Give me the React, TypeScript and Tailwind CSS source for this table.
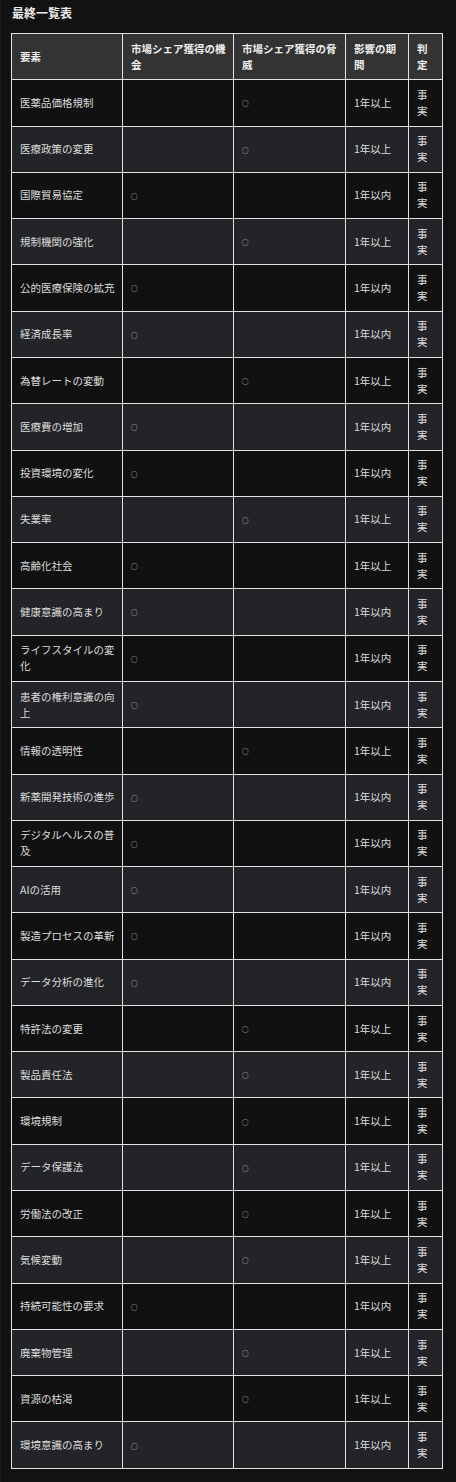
import React from 'react';

type Row = { name: string; opp: boolean; period: string };

// threat is simply the inverse of opp in this table
const rows: Row[] = [
  { name: '医薬品価格規制', opp: false, period: '1年以上' },
  { name: '医療政策の変更', opp: false, period: '1年以上' },
  { name: '国際貿易協定', opp: true, period: '1年以内' },
  { name: '規制機関の強化', opp: false, period: '1年以上' },
  { name: '公的医療保険の拡充', opp: true, period: '1年以内' },
  { name: '経済成長率', opp: true, period: '1年以内' },
  { name: '為替レートの変動', opp: false, period: '1年以上' },
  { name: '医療費の増加', opp: true, period: '1年以内' },
  { name: '投資環境の変化', opp: true, period: '1年以内' },
  { name: '失業率', opp: false, period: '1年以上' },
  { name: '高齢化社会', opp: true, period: '1年以上' },
  { name: '健康意識の高まり', opp: true, period: '1年以内' },
  { name: 'ライフスタイルの変化', opp: true, period: '1年以内' },
  { name: '患者の権利意識の向上', opp: true, period: '1年以内' },
  { name: '情報の透明性', opp: false, period: '1年以上' },
  { name: '新薬開発技術の進歩', opp: true, period: '1年以内' },
  { name: 'デジタルヘルスの普及', opp: true, period: '1年以内' },
  { name: 'AIの活用', opp: true, period: '1年以内' },
  { name: '製造プロセスの革新', opp: true, period: '1年以内' },
  { name: 'データ分析の進化', opp: true, period: '1年以内' },
  { name: '特許法の変更', opp: false, period: '1年以上' },
  { name: '製品責任法', opp: false, period: '1年以上' },
  { name: '環境規制', opp: false, period: '1年以上' },
  { name: 'データ保護法', opp: false, period: '1年以上' },
  { name: '労働法の改正', opp: false, period: '1年以上' },
  { name: '気候変動', opp: false, period: '1年以上' },
  { name: '持続可能性の要求', opp: true, period: '1年以内' },
  { name: '廃棄物管理', opp: false, period: '1年以上' },
  { name: '資源の枯渇', opp: false, period: '1年以上' },
  { name: '環境意識の高まり', opp: true, period: '1年以内' },
];

const cell = 'border border-[#e2e2e2] pl-2 pr-[5px] py-[6.65px] align-middle';

const Mark = () => <span className="text-[6.5px] align-middle">○</span>;

export default function App() {
  return (
    <div
      className="min-h-[1482px] bg-[#121212] border-l border-[#1f1f1f] pl-[10px] pt-[3px] pb-[14px] text-[#dcdcdc]"
      style={{ fontFamily: '"Noto Sans CJK JP", "Noto Sans", sans-serif' }}
    >
      <h2 className="text-[12px] font-bold leading-[20px] text-[#ececec] pl-[1px] mb-[10px]">最終一覧表</h2>
      <table className="w-[431px] table-fixed border-collapse text-[10.5px] leading-[16px]">
        <colgroup>
          <col className="w-[111px]" />
          <col className="w-[111px]" />
          <col className="w-[112px]" />
          <col className="w-[63px]" />
          <col className="w-[34px]" />
        </colgroup>
        <thead>
          <tr className="bg-[#333333] text-left font-bold text-[#eeeeee]">
            <th className={cell}>要素</th>
            <th className={cell}>市場シェア獲得の機会</th>
            <th className={cell}>市場シェア獲得の脅威</th>
            <th className={cell}>影響の期間</th>
            <th className={cell}>判定</th>
          </tr>
        </thead>
        <tbody>
          {rows.map((r, i) => (
            <tr key={r.name} className={i % 2 === 0 ? 'bg-[#111111]' : 'bg-[#232427]'}>
              <td className={cell}>{r.name}</td>
              <td className={cell}>{r.opp ? <Mark /> : null}</td>
              <td className={cell}>{r.opp ? null : <Mark />}</td>
              <td className={cell}>{r.period}</td>
              <td className={cell}>事実</td>
            </tr>
          ))}
        </tbody>
      </table>
    </div>
  );
}
